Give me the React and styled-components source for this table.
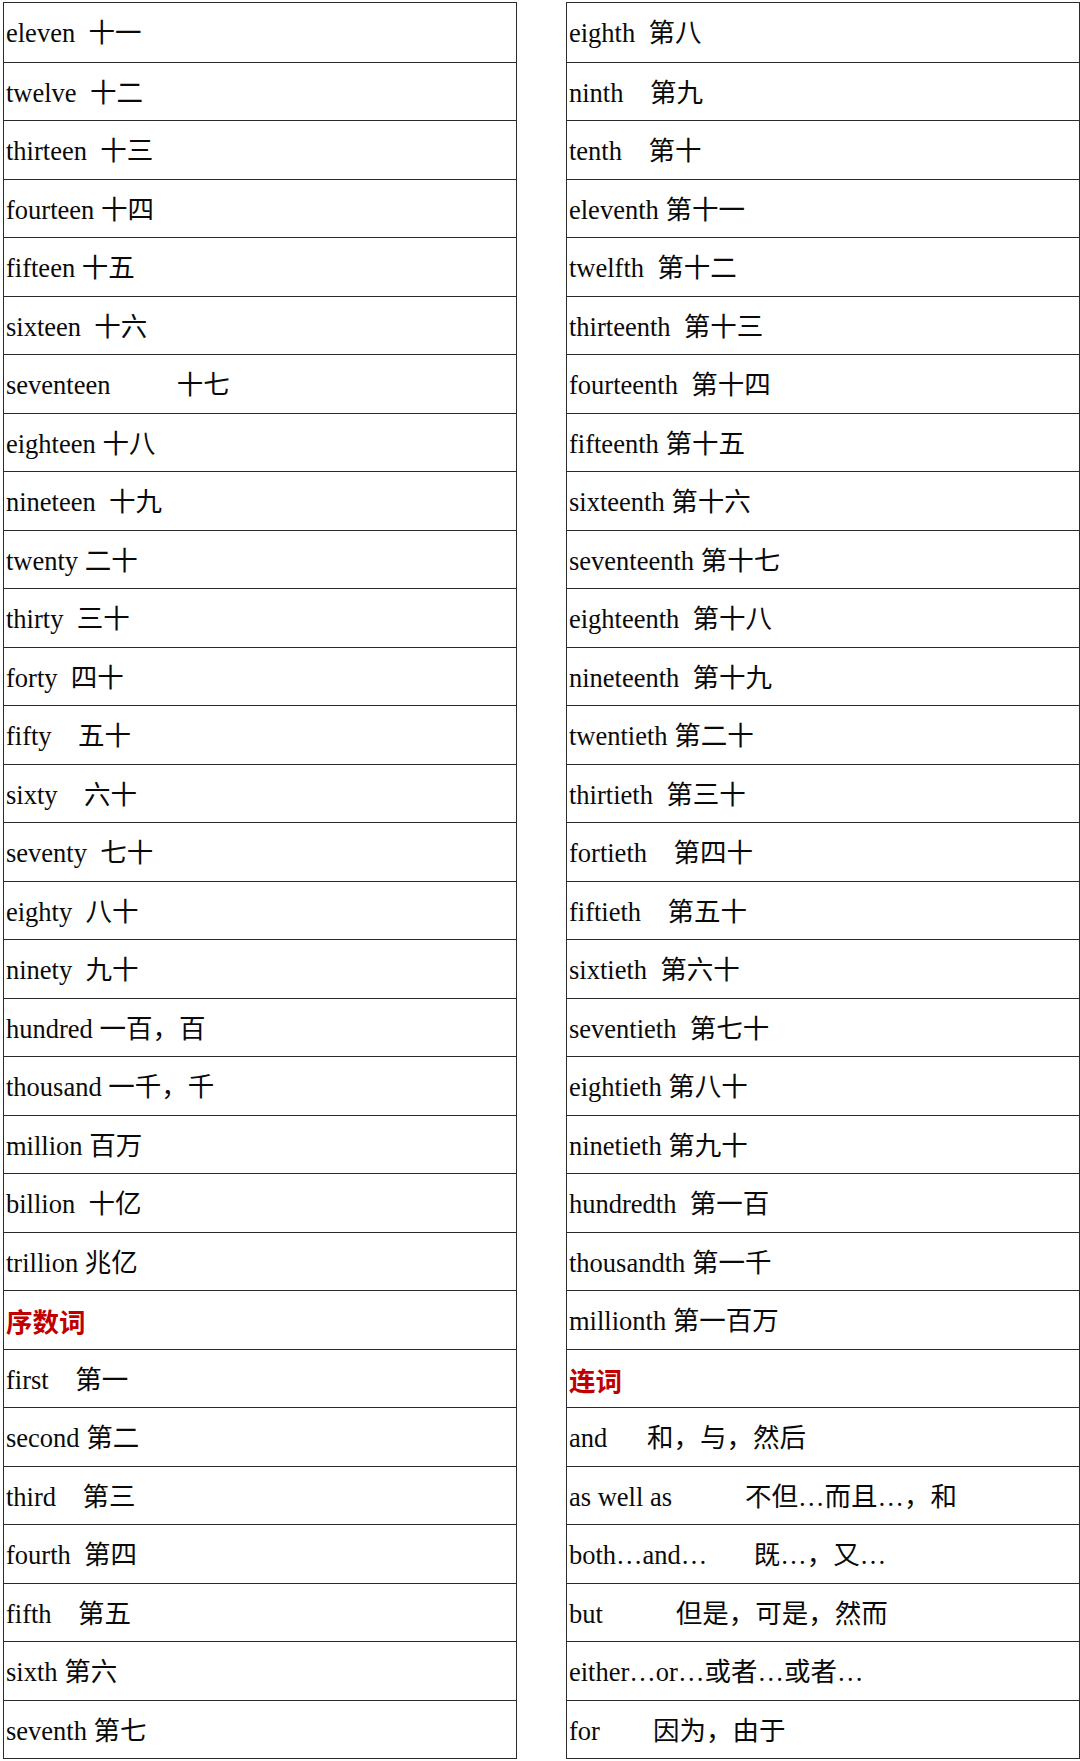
import React from 'react';
import styled, { createGlobalStyle } from 'styled-components';

// 基数词 / 序数词 / 连词 word list, two bordered columns of 30 rows
const sp = n => ' '.repeat(n);

const leftRows = [
	'eleven' + sp(2) + '十一',
	'twelve' + sp(2) + '十二',
	'thirteen' + sp(2) + '十三',
	'fourteen' + sp(1) + '十四',
	'fifteen' + sp(1) + '十五',
	'sixteen' + sp(2) + '十六',
	'seventeen' + sp(10) + '十七',
	'eighteen' + sp(1) + '十八',
	'nineteen' + sp(2) + '十九',
	'twenty' + sp(1) + '二十',
	'thirty' + sp(2) + '三十',
	'forty' + sp(2) + '四十',
	'fifty' + sp(4) + '五十',
	'sixty' + sp(4) + '六十',
	'seventy' + sp(2) + '七十',
	'eighty' + sp(2) + '八十',
	'ninety' + sp(2) + '九十',
	'hundred' + sp(1) + '一百，百',
	'thousand' + sp(1) + '一千，千',
	'million' + sp(1) + '百万',
	'billion' + sp(2) + '十亿',
	'trillion' + sp(1) + '兆亿',
	{ head: '序数词' },
	'first' + sp(4) + '第一',
	'second' + sp(1) + '第二',
	'third' + sp(4) + '第三',
	'fourth' + sp(2) + '第四',
	'fifth' + sp(4) + '第五',
	'sixth' + sp(1) + '第六',
	'seventh' + sp(1) + '第七',
];

const rightRows = [
	'eighth' + sp(2) + '第八',
	'ninth' + sp(4) + '第九',
	'tenth' + sp(4) + '第十',
	'eleventh' + sp(1) + '第十一',
	'twelfth' + sp(2) + '第十二',
	'thirteenth' + sp(2) + '第十三',
	'fourteenth' + sp(2) + '第十四',
	'fifteenth' + sp(1) + '第十五',
	'sixteenth' + sp(1) + '第十六',
	'seventeenth' + sp(1) + '第十七',
	'eighteenth' + sp(2) + '第十八',
	'nineteenth' + sp(2) + '第十九',
	'twentieth' + sp(1) + '第二十',
	'thirtieth' + sp(2) + '第三十',
	'fortieth' + sp(4) + '第四十',
	'fiftieth' + sp(4) + '第五十',
	'sixtieth' + sp(2) + '第六十',
	'seventieth' + sp(2) + '第七十',
	'eightieth' + sp(1) + '第八十',
	'ninetieth' + sp(1) + '第九十',
	'hundredth' + sp(2) + '第一百',
	'thousandth' + sp(1) + '第一千',
	'millionth' + sp(1) + '第一百万',
	{ head: '连词' },
	'and' + sp(6) + '和，与，然后',
	'as well as' + sp(11) + '不但…而且…，和',
	'both…and…' + sp(7) + '既…，又…',
	'but' + sp(11) + '但是，可是，然而',
	'either…or…或者…或者…',
	'for' + sp(8) + '因为，由于',
];

const GlobalStyle = createGlobalStyle`
	html, body {
		margin: 0;
		padding: 0;
		background: #ffffff;
	}
`;

const Sheet = styled.div`
	display: grid;
	grid-template-columns: 514px 514px;
	column-gap: 49px;
	padding: 2px 0 0 3px;
	font-family: 'Liberation Serif', 'Noto Sans CJK SC', serif;
	font-size: 26.5px;
	color: #0a0a0a;
`;

const Column = styled.div`
	border: 1px solid #2b2b2b;
	display: flex;
	flex-direction: column;
`;

const Row = styled.div`
	box-sizing: border-box;
	height: 58.5px;
	line-height: 56px;
	padding: 2px 0 0 2px;
	white-space: pre;
	overflow: hidden;
	& + & {
		border-top: 1px solid #2b2b2b;
	}
`;

const Heading = styled.span`
	color: #c00000;
	font-weight: bold;
	font-family: 'Noto Sans CJK SC', sans-serif;
`;

const WordColumn = ({ rows }) => (
	<Column>
		{rows.map((r, i) => (
			<Row key={i}>{typeof r === 'string' ? r : <Heading>{r.head}</Heading>}</Row>
		))}
	</Column>
);

const App = () => (
	<>
		<GlobalStyle />
		<Sheet>
			<WordColumn rows={leftRows} />
			<WordColumn rows={rightRows} />
		</Sheet>
	</>
);

export default App;
